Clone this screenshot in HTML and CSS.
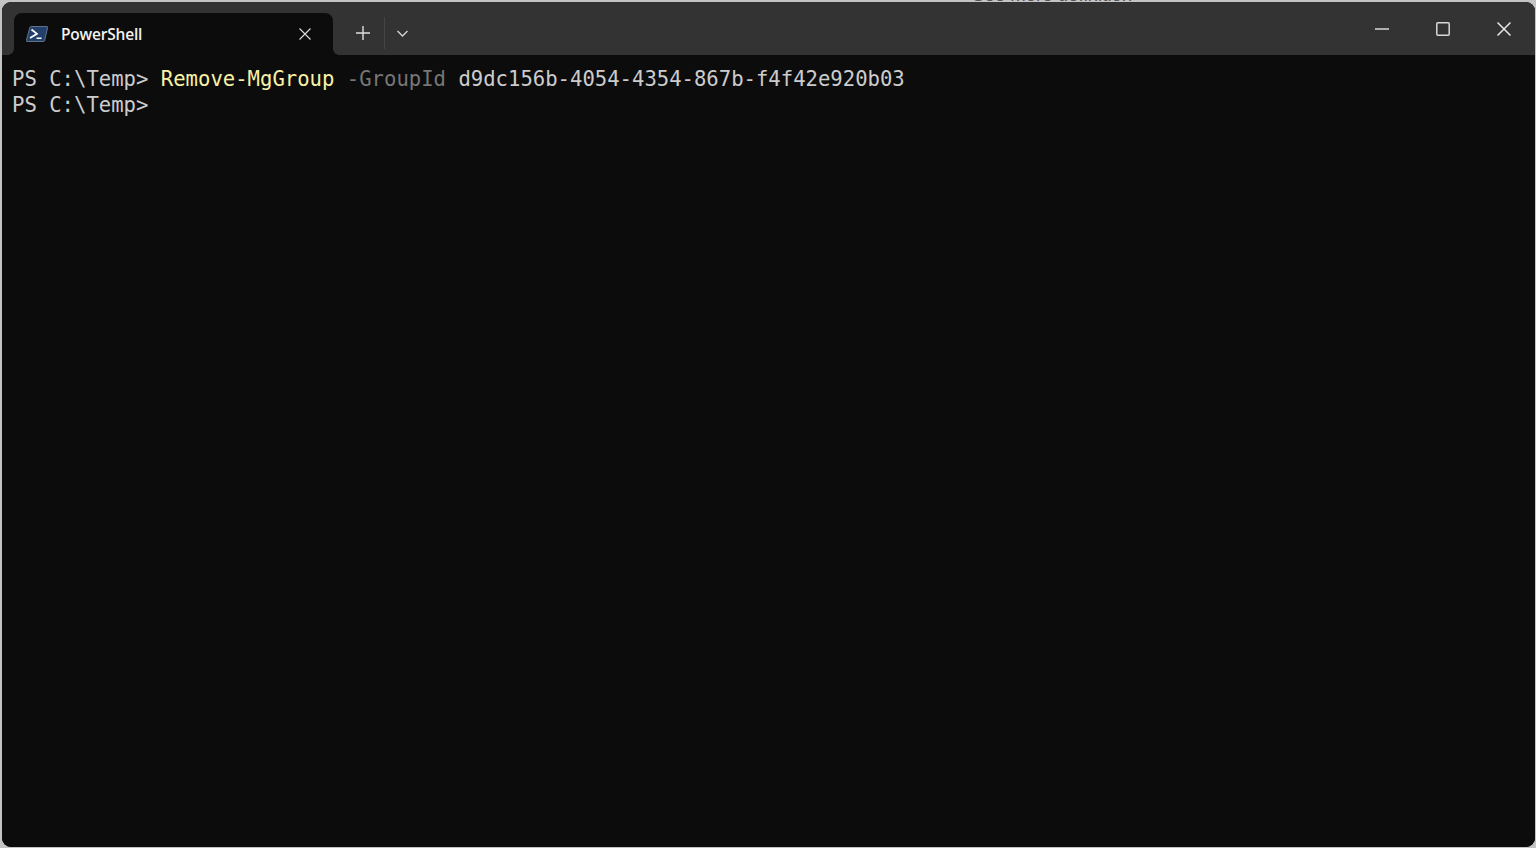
FILE: index.html
```html
<!DOCTYPE html>
<html lang="en">
<head>
<meta charset="utf-8">
<title>PowerShell</title>
<link rel="stylesheet" href="styles.css">
</head>
<body>
<div class="peek">See more definition</div>
<main class="window">
  <header class="titlebar">
    <div class="tab">
      <svg class="ps-icon" width="22" height="16" viewBox="0 0 22 16">
        <path d="M5.2.5H21c.5 0 .8.4.7.9l-3.1 13.4c-.1.4-.5.7-.9.7H1c-.5 0-.8-.4-.7-.9L3.9 1.2C4.100.800 4.700.5 5.200.5z" fill="#23406b" stroke="#7f93ad" stroke-width=".7"/>
        <path d="M5.500 3.500l5.500 4.300-7 4.200" fill="none" stroke="#fff" stroke-width="1.700"/>
        <path d="M10.500 12.300h5" fill="none" stroke="#fff" stroke-width="1.400"/>
      </svg>
      <span class="tab-title">PowerShell</span>
      <svg class="tab-close" width="12" height="12" viewBox="0 0 12 12">
        <path d="M.5.5l11 11M11.500.5l-11 11" fill="none" stroke="#dcdcdc" stroke-width="1.100"/>
      </svg>
    </div>
    <div class="tab-actions">
      <svg class="new-tab" width="14" height="14" viewBox="0 0 14 14">
        <path d="M7 0v14M0 7h14" fill="none" stroke="#dedede" stroke-width="1.400"/>
      </svg>
      <span class="divider"></span>
      <svg class="chevron" width="11" height="7" viewBox="0 0 11 7">
        <path d="M.5 1l5 5 5-5" fill="none" stroke="#d6d6d6" stroke-width="1.300"/>
      </svg>
    </div>
    <div class="controls">
      <div class="control">
        <svg width="14" height="2" viewBox="0 0 14 2"><path d="M0 1h14" stroke="#d8d8d8" stroke-width="1.500"/></svg>
      </div>
      <div class="control">
        <svg width="14" height="14" viewBox="0 0 14 14"><rect x=".8" y=".8" width="12.400" height="12.400" rx="1" fill="none" stroke="#d8d8d8" stroke-width="1.500"/></svg>
      </div>
      <div class="control">
        <svg width="14" height="14" viewBox="0 0 14 14"><path d="M.5.5l13 13M13.500.5l-13 13" fill="none" stroke="#e6e6e6" stroke-width="1.500"/></svg>
      </div>
    </div>
  </header>
  <section class="terminal">
    <div class="line">PS C:\Temp&gt; <span class="cmd">Remove-MgGroup</span> <span class="param">-GroupId</span> d9dc156b-4054-4354-867b-f4f42e920b03</div>
    <div class="line">PS C:\Temp&gt;</div>
  </section>
</main>
</body>
</html>
```
FILE: styles.css
```css
html, body {
  margin: 0;
  height: 100%;
  overflow: hidden;
}
body {
  background: #c4c4c4;
  padding: 2px 1px 1px 2px;
  box-sizing: border-box;
}
.peek {
  position: absolute;
  left: 972px;
  top: -13px;
  font: 18.600px/16px "Liberation Sans", sans-serif;
  color: #555;
}
.window {
  position: relative;
  height: 845px;
  display: flex;
  flex-direction: column;
  border-radius: 9px;
  overflow: hidden;
  background: #0c0c0c;
}
.titlebar {
  height: 53px;
  flex: none;
  display: flex;
  align-items: flex-end;
  background: #333333;
  padding-left: 12px;
}
.tab {
  width: 319px;
  height: 42px;
  box-sizing: border-box;
  background: #0c0c0c;
  border-radius: 8px 8px 0 0;
  display: flex;
  align-items: center;
  padding: 0 22px 0 12px;
  position: relative;
}
.tab::before, .tab::after {
  content: "";
  position: absolute;
  bottom: 0;
  width: 6px;
  height: 6px;
  background: radial-gradient(circle at var(--fx) 0, transparent 5.500px, #0c0c0c 6px);
}
.tab::before { left: -6px; --fx: 0; }
.tab::after { right: -6px; --fx: 100%; }
.ps-icon {
  flex: none;
  margin-right: 13px;
}
.tab-title {
  flex: 1;
  font: 600 15.500px/20px "Open Sans", sans-serif;
  color: #f2f2f2;
  letter-spacing: -.2px;
}
.tab-close {
  flex: none;
  margin-bottom: 1px;
}
.tab-actions {
  display: flex;
  align-items: center;
  height: 42px;
  margin-left: 23px;
}
.new-tab {
  flex: none;
  margin-bottom: 2px;
}
.divider {
  width: 1px;
  height: 32px;
  background: #444;
  margin: 0 12px 2px 14px;
}
.chevron {
  flex: none;
  margin-bottom: 2px;
}
.controls {
  margin-left: auto;
  align-self: stretch;
  display: flex;
  margin-right: 1px;
}
.control {
  width: 61px;
  height: 54px;
  display: flex;
  align-items: center;
  justify-content: center;
}
.terminal {
  flex: 1;
  padding: 11px 0 0 10px;
  font: 20.600px/26px "DejaVu Sans Mono", monospace;
  color: #cccccc;
  background: #0c0c0c;
}
.line { white-space: pre; }
.cmd { color: #f9f1a5; }
.param { color: #767676; }
```
